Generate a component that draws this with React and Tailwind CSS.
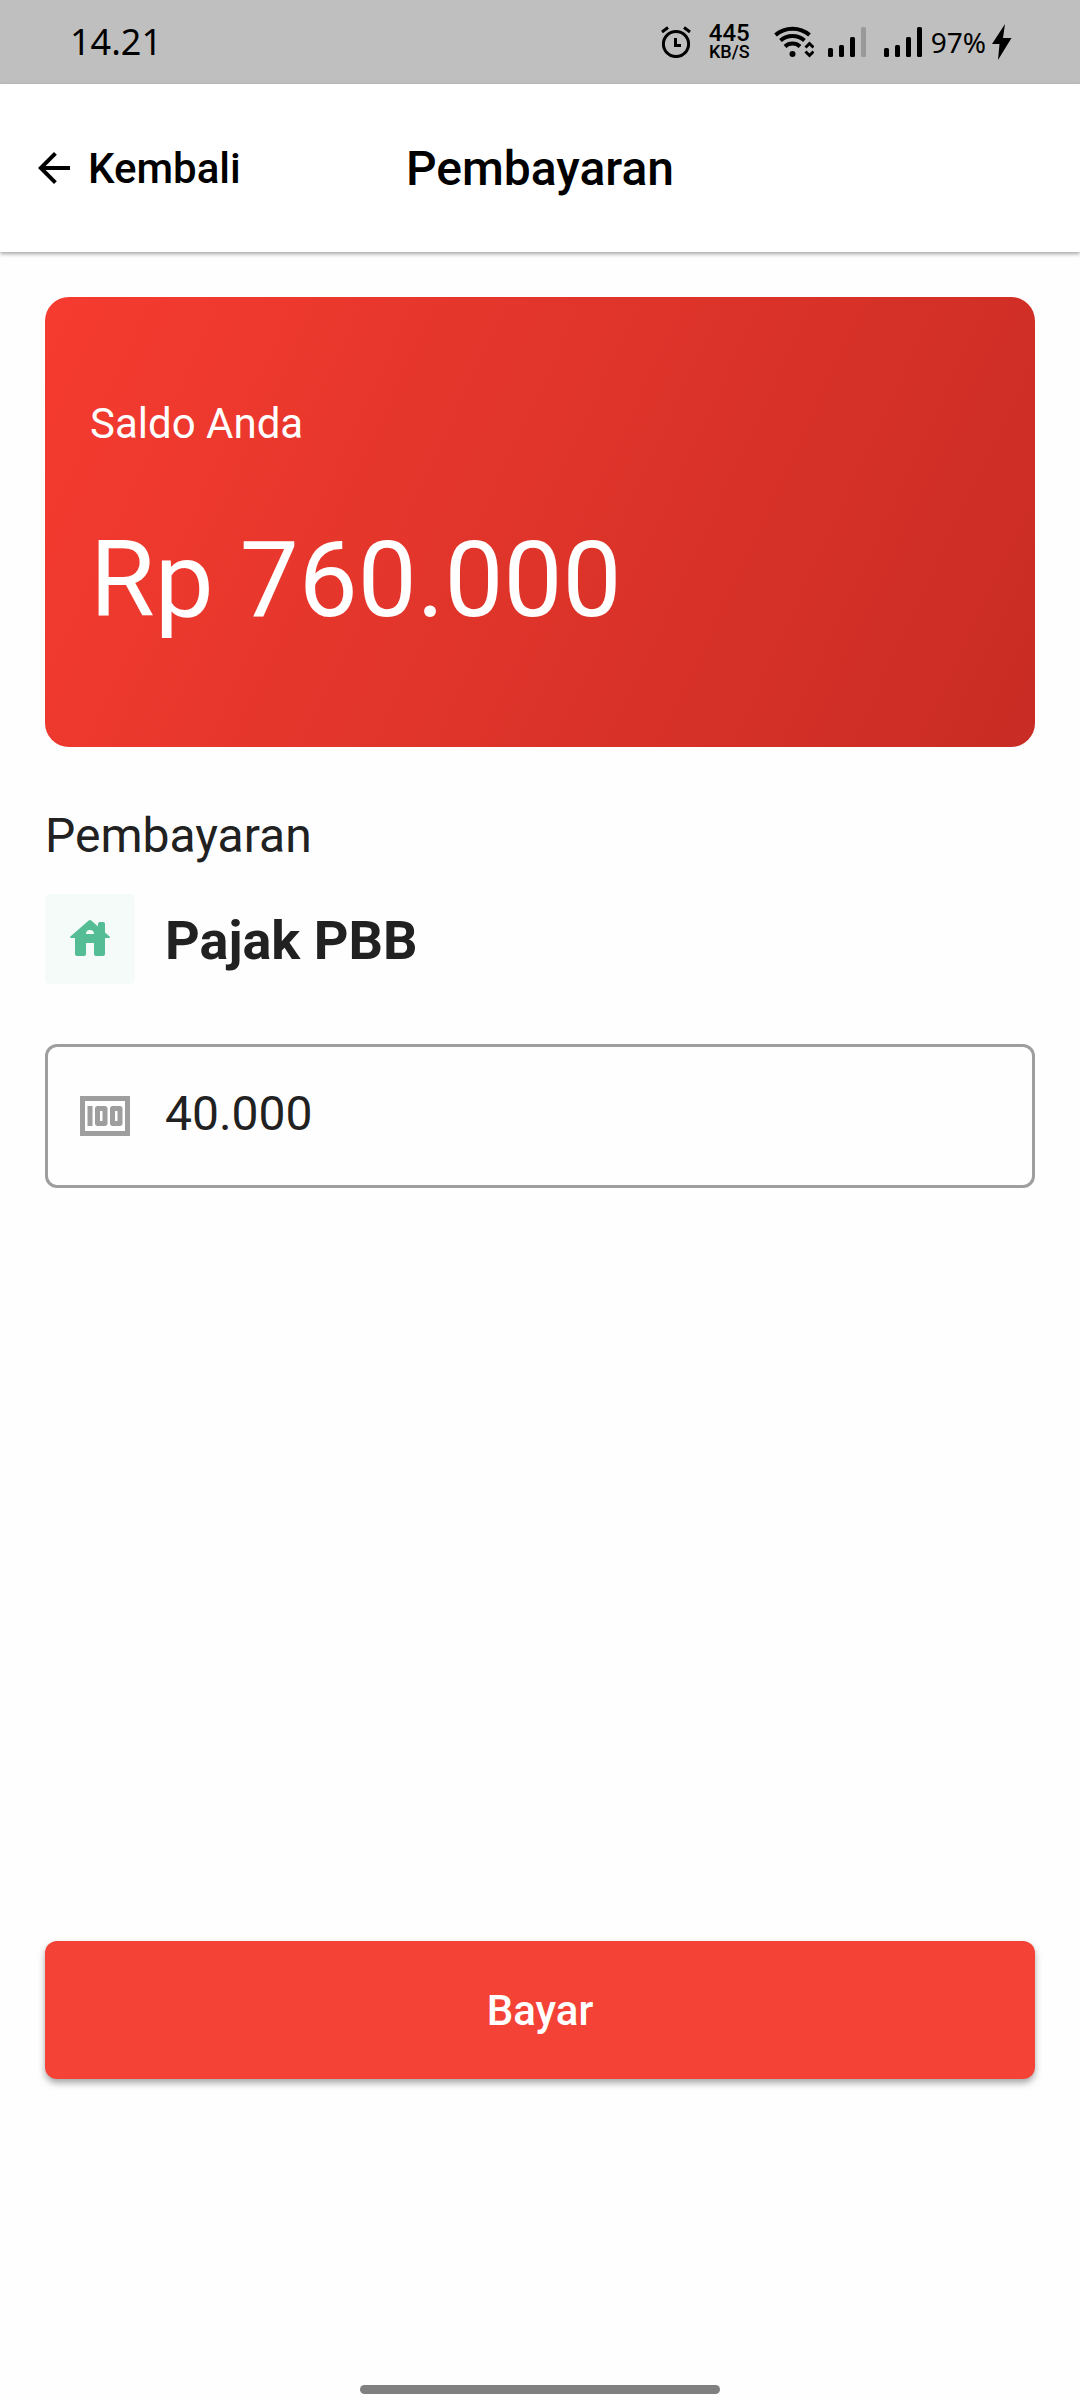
import React, { useState } from "react";
import { MdArrowBack, MdMoney } from "react-icons/md";

const SIGNAL_BARS = [
  { x: 0, y: 21, h: 9 },
  { x: 11, y: 18, h: 12 },
  { x: 22, y: 10, h: 20 },
  { x: 33, y: 0, h: 30 },
];

function AlarmIcon() {
  return (
    <svg width="30" height="32" viewBox="0 0 30 32" fill="none" stroke="black" aria-hidden="true">
      <circle cx="15" cy="18" r="12.6" strokeWidth="3" />
      <path d="M14.500 12v7.500H20" strokeWidth="3" />
      <path d="M1 6l6-4.500M29 6l-6-4.500" strokeWidth="3" />
    </svg>
  );
}

function WifiIcon() {
  return (
    <svg width="40" height="32" viewBox="0 0 40 32" fill="none" stroke="black" aria-hidden="true">
      <path d="M1.500 9a26 26 0 0 1 34 0" strokeWidth="4" />
      <path d="M6.500 14.500a18.500 18.500 0 0 1 24 0" strokeWidth="4" />
      <path d="M11 20.500a11 11 0 0 1 15 0" strokeWidth="4" />
      <circle cx="18.500" cy="28" r="3" fill="black" stroke="none" />
      <path d="M31.500 21.500l4-4 4 4M31.500 25.500l4 4 4-4" strokeWidth="3" />
    </svg>
  );
}

function SignalIcon({ level }) {
  return (
    <svg width="38" height="30" viewBox="0 0 38 30" aria-hidden="true">
      {SIGNAL_BARS.map((bar, i) => (
        <rect key={bar.x} x={bar.x} y={bar.y} width="5" height={bar.h} rx="1.5" fill={i < level ? "#000" : "#999"} />
      ))}
    </svg>
  );
}

function BoltIcon() {
  return (
    <svg width="20" height="36" viewBox="0 0 20 36" aria-hidden="true">
      <path d="M13 0L0 20h7.500L6 36l13.500-22H11z" fill="black" />
    </svg>
  );
}

function HouseIcon() {
  return (
    <svg width="48" height="48" viewBox="0 0 48 48" fill="#54bd95" aria-hidden="true">
      <path
        fillRule="evenodd"
        d="M22.700 5.600a2 2 0 0 1 2.600 0L32 11.500V9a2 2 0 0 1 2-2h3a2 2 0 0 1 2 2v8.600l4.600 4c.8.700.4 1.400-.5 1.400H39v16a2 2 0 0 1-2 2h-7a2 2 0 0 1-2-2V28h-8v11a2 2 0 0 1-2 2h-7a2 2 0 0 1-2-2V23H4.900c-.9 0-1.300-.7-.5-1.400zM20 19h8a4 4 0 0 0-8 0z"
      />
    </svg>
  );
}

function StatusBar() {
  return (
    <div className="flex h-[84px] shrink-0 items-center justify-between bg-[#bfbfbf] pl-[70px] pr-[68px] font-['Noto_Sans',sans-serif] text-black">
      <span className="text-[36px] leading-none">14.21</span>
      <div className="flex items-center">
        <AlarmIcon />
        <div className="ml-[18px] flex flex-col items-center font-[Roboto,sans-serif] font-medium">
          <span className="text-[24px] leading-[20px]">445</span>
          <span className="text-[18px] leading-[18px]">KB/S</span>
        </div>
        <div className="ml-[24px]">
          <WifiIcon />
        </div>
        <div className="ml-[14px]">
          <SignalIcon level={3} />
        </div>
        <div className="ml-[18px]">
          <SignalIcon level={4} />
        </div>
        <span className="ml-[9px] mr-1.5 text-[28px] leading-none">97%</span>
        <BoltIcon />
      </div>
    </div>
  );
}

export default function App() {
  const [amount, setAmount] = useState("40.000");

  return (
    <div className="flex min-h-screen flex-col bg-[#fefefe] font-[Roboto,sans-serif] text-[#212121]">
      <StatusBar />
      <header className="grid h-[168px] shrink-0 grid-cols-[1fr_auto_1fr] items-center bg-white px-[30px] text-black shadow-[0_2px_4px_rgba(0,0,0,0.35)]">
        <button type="button" className="flex items-center gap-[10px] justify-self-start text-[42px] font-medium leading-none">
          <MdArrowBack size={48} aria-hidden="true" />
          <span className="pt-0.5">Kembali</span>
        </button>
        <h1 className="pt-0.5 text-[48px] font-medium leading-none">Pembayaran</h1>
      </header>

      <main className="flex flex-1 flex-col px-[45px] pb-[306px] pt-[45px]">
        <section className="flex h-[450px] flex-col justify-center rounded-[24px] bg-linear-[115deg,#f63b30,#e1352b_45%,#d43027_75%,#c82c24] px-[45px] text-white">
          <p className="text-[42px] leading-[48px]">Saldo Anda</p>
          <p className="mt-[70px] text-[105px] leading-[126px]">Rp 760.000</p>
        </section>

        <p className="mt-[60px] text-[48px] leading-[57px]">Pembayaran</p>
        <div className="mt-[30px] flex items-center gap-[30px]">
          <div className="flex size-[90px] items-center justify-center rounded-[5px] bg-[#f5fbf9]">
            <HouseIcon />
          </div>
          <h2 className="pt-1 text-[54px] font-bold leading-none">Pajak PBB</h2>
        </div>

        <label className="mt-[60px] flex h-[144px] items-center gap-[30px] rounded-[12px] border-3 border-[#9e9e9e] px-[27px]">
          <MdMoney size={60} color="#9e9e9e" className="shrink-0" aria-hidden="true" />
          <input
            type="text"
            inputMode="numeric"
            aria-label="Jumlah pembayaran"
            value={amount}
            onChange={(e) => setAmount(e.target.value)}
            className="min-w-0 flex-1 bg-transparent pb-1.5 text-[48px] leading-[57px] outline-none"
          />
        </label>

        <button
          type="button"
          className="mt-auto h-[138px] w-full rounded-[12px] bg-[#f44336] text-[42px] font-medium text-white shadow-[0_4px_7px_rgba(0,0,0,0.35)]"
        >
          Bayar
        </button>
      </main>

      <div className="mx-auto mb-1.5 h-[9px] w-1/3 rounded-full bg-[#808080]" />
    </div>
  );
}
